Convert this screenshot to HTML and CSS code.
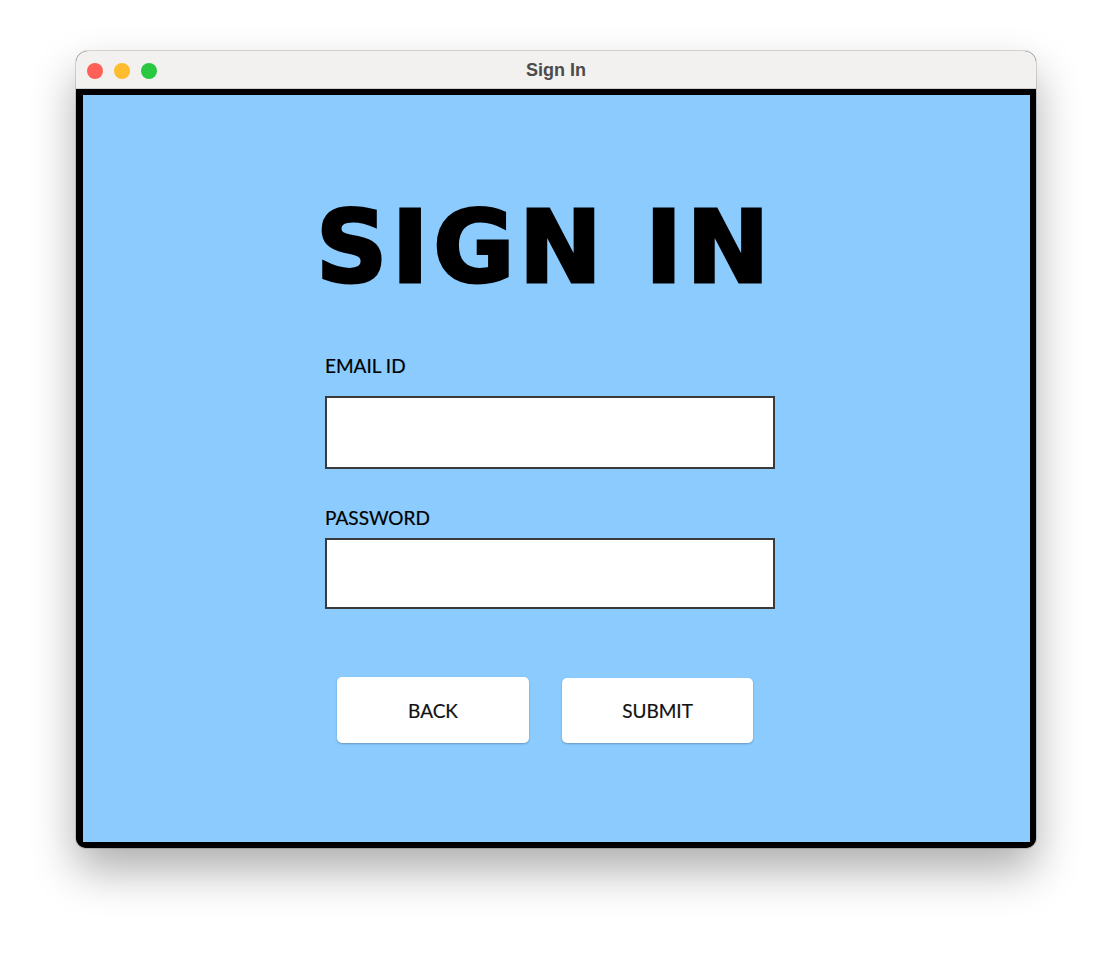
FILE: index.html
```html
<!DOCTYPE html>
<html>
<head>
<meta charset="utf-8">
<title>Sign In</title>
<link rel="stylesheet" href="styles.css">
</head>
<body>
<div class="window">
  <div class="titlebar">
    <div class="lights">
      <span class="light red"></span>
      <span class="light yellow"></span>
      <span class="light green"></span>
    </div>
    <div class="wtitle">Sign In</div>
  </div>
  <div class="frame">
    <div class="content">
      <h1 class="heading">SIGN IN</h1>
      <label class="label label-email">EMAIL ID</label>
      <div class="field field-email"></div>
      <label class="label label-pass">PASSWORD</label>
      <div class="field field-pass"></div>
      <div class="buttons">
        <button class="btn btn-back">BACK</button>
        <button class="btn btn-submit">SUBMIT</button>
      </div>
    </div>
  </div>
</div>
</body>
</html>
```
FILE: styles.css
```css
html, body {
  margin: 0;
  padding: 0;
  background: #ffffff;
}
body {
  padding: 51px 0 0 76px;
  height: 953px;
  box-sizing: border-box;
  overflow: hidden;
}
.window {
  width: 960px;
  height: 797px;
  border-radius: 12px 12px 10px 10px;
  overflow: hidden;
  display: flex;
  flex-direction: column;
  box-shadow: 0 22px 45px rgba(0,0,0,0.32), 0 0 0 1px rgba(0,0,0,0.14);
  background: #000;
}
.titlebar {
  height: 38px;
  flex: none;
  background: #f2f1ef;
  border-bottom: 1px solid #cfcfcf;
  box-sizing: border-box;
  position: relative;
  display: flex;
  align-items: center;
  justify-content: center;
}
.lights {
  position: absolute;
  left: 11px;
  top: 12px;
  display: flex;
  gap: 11px;
}
.light {
  width: 16px;
  height: 16px;
  border-radius: 50%;
  display: block;
}
.red { background: #fe5f57; }
.yellow { background: #febc2e; }
.green { background: #28c840; }
.wtitle {
  font-family: "Liberation Sans", Arial, sans-serif;
  font-weight: bold;
  font-size: 18px;
  color: #4b4b4b;
  padding-top: 1px;
}
.frame {
  flex: 1;
  padding: 6px 6px 6px 7px;
  background: #000;
  display: flex;
  border-radius: 0 0 10px 10px;
}
.content {
  flex: 1;
  background: #8bcbfe;
  padding: 103px 0 0 242px;
  display: flex;
  flex-direction: column;
  align-items: flex-start;
}
.heading {
  margin: 0 0 0 -9px;
  font-family: "DejaVu Sans", sans-serif;
  font-weight: bold;
  font-size: 99px;
  line-height: 99px;
  color: #000;
  letter-spacing: 4.5px;
  -webkit-text-stroke: 3px #000;
}
.label {
  font-family: Lato, "Open Sans", sans-serif;
  font-size: 19px;
  line-height: 24px;
  color: #000;
  -webkit-text-stroke: 0.2px #000;
}
.label-email { margin-top: 57px; }
.label-pass { margin-top: 37px; }
.field {
  width: 450px;
  background: #fff;
  border: 2px solid #3a3a3a;
  box-sizing: border-box;
}
.field-email { height: 73px; margin-top: 18px; }
.field-pass { height: 71px; margin-top: 8px; }
.buttons {
  display: flex;
  gap: 33px;
  margin: 68px 0 0 12px;
  align-items: flex-start;
}
.btn {
  width: 192px;
  height: 66px;
  background: #fff;
  border: none;
  border-radius: 5px;
  box-shadow: 0 1px 2px rgba(0,0,0,0.25);
  font-family: Lato, "Open Sans", sans-serif;
  font-size: 19px;
  color: #111;
  padding: 0;
  -webkit-text-stroke: 0.2px #111;
}
.btn-submit {
  width: 191px;
  height: 65px;
  margin-top: 1px;
}
```
